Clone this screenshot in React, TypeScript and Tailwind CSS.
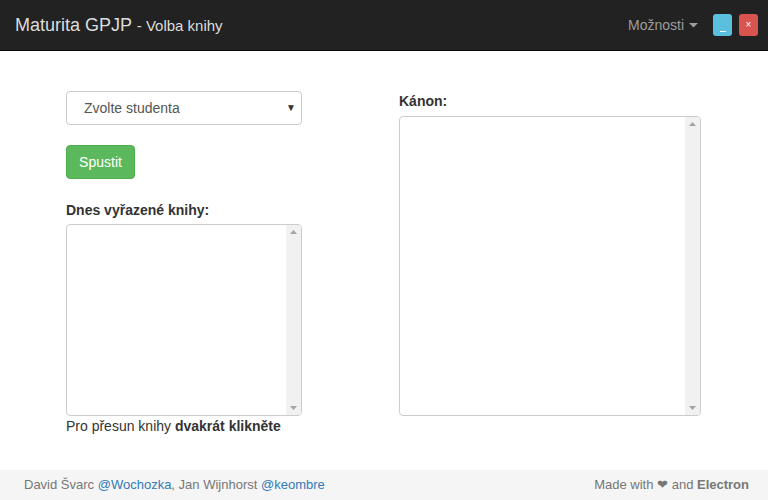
import React from 'react';

function FakeList({ className }: { className: string }) {
  return (
    <div className={`flex rounded border border-[#ccc] bg-white overflow-hidden ${className}`}>
      <div className="flex-1" />
      <div className="flex w-[15px] flex-col items-center justify-between bg-[#f1f1f1] py-[5px]">
        <svg width="7" height="4" viewBox="0 0 7 4"><path d="M0 4 L3.5 0 L7 4 Z" fill="#a3a3a3" /></svg>
        <svg width="7" height="4" viewBox="0 0 7 4"><path d="M0 0 L3.5 4 L7 0 Z" fill="#a3a3a3" /></svg>
      </div>
    </div>
  );
}

export default function App() {
  return (
    <div className="flex h-[500px] w-[768px] flex-col bg-white font-['Liberation_Sans',Arial,sans-serif] text-[14px] text-[#333]">
      {/* Navbar */}
      <div className="flex h-[51px] shrink-0 items-center border-b border-[#080808] bg-[#222] pl-[15px] pr-[10px]">
        <div className="text-[18px] text-[#ddd]">
          Maturita GPJP <span className="text-[15px]">- Volba knihy</span>
        </div>
        <div className="ml-auto flex items-center text-[#9d9d9d]">
          <span>Možnosti</span>
          <svg className="ml-[5px]" width="9" height="5" viewBox="0 0 9 5"><path d="M0 0 L4.5 4.5 L9 0 Z" fill="#9d9d9d" /></svg>
        </div>
        <div className="ml-[15px] flex h-[22px] w-[19px] items-end justify-center rounded-[3px] bg-[#5bc0de] pb-[4px]">
          <div className="h-px w-[6px] bg-white" />
        </div>
        <div className="ml-[7px] flex h-[22px] w-[19px] items-center justify-center rounded-[3px] bg-[#d9534f] text-[10px] leading-none text-white">
          ×
        </div>
      </div>

      {/* Content */}
      <div className="flex flex-1 pl-[66px] pt-[40px]">
        <div className="flex w-[236px] flex-col">
          <div className="relative flex h-[34px] items-center rounded border border-[#ccc] pl-[17px] text-[#555]">
            Zvolte studenta
            <span className="absolute right-[5px] top-[8px] text-[10px] text-[#333]">▼</span>
          </div>
          <button className="mt-[20px] h-[34px] w-[69px] rounded border border-[#4cae4c] bg-[#5cb85c] text-white">
            Spustit
          </button>
          <div className="mt-[21px] font-bold">Dnes vyřazené knihy:</div>
          <FakeList className="mt-[3px] h-[192px]" />
          <div className="mt-0">
            Pro přesun knihy <b>dvakrát klikněte</b>
          </div>
        </div>
        <div className="ml-[97px] flex w-[302px] flex-col">
          <div className="font-bold">Kánon:</div>
          <FakeList className="mt-[4px] h-[300px]" />
        </div>
      </div>

      {/* Footer */}
      <div className="flex h-[30px] shrink-0 items-center bg-[#f5f5f5] pl-[24px] pr-[19px] text-[13px] text-[#777]">
        <div>
          David Švarc <span className="text-[#337ab7]">@Wochozka</span>, Jan Wijnhorst{' '}
          <span className="text-[#337ab7]">@keombre</span>
        </div>
        <div className="ml-auto">
          Made with ❤ and <b>Electron</b>
        </div>
      </div>
    </div>
  );
}
